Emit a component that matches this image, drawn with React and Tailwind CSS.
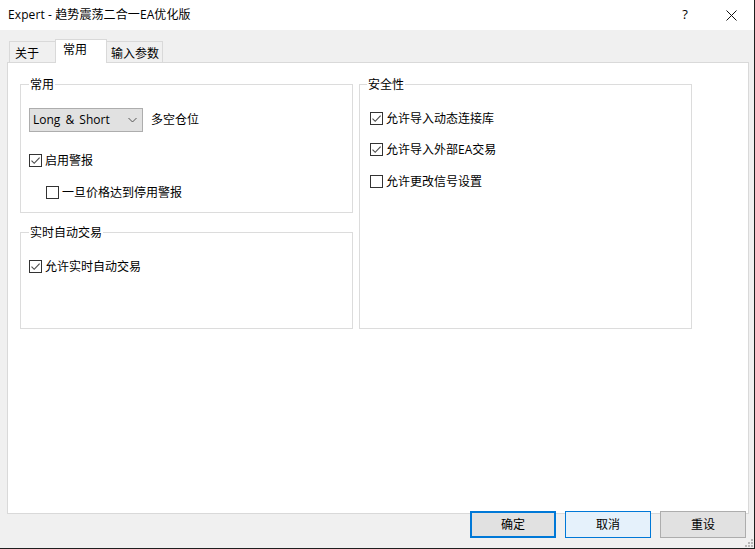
import React from "react";

function Box({ checked }) {
  return (
    <span className="flex h-[13px] w-[13px] shrink-0 items-center justify-center border border-[#333333] bg-white">
      {checked && (
        <svg width="11" height="11" viewBox="0 0 11 11">
          <path d="M1.5 5.6 L4.2 8.3 L9.6 2.6" stroke="#4a4a4a" strokeWidth="1.15" fill="none" />
        </svg>
      )}
    </span>
  );
}

function CheckRow({ checked, label, className = "" }) {
  return (
    <div className={"flex h-[13px] items-center gap-[3px] leading-[14px] " + className}>
      <Box checked={checked} />
      <span className="whitespace-nowrap">{label}</span>
    </div>
  );
}

function Tab({ label, selected, w, pl }) {
  if (selected) {
    return (
      <div
        className={`relative z-10 -mb-px -ml-px h-[24px] border-l border-r border-t border-[#d9d9d9] bg-white pt-[3px] leading-[14px] ${w} ${pl}`}
      >
        {label}
      </div>
    );
  }
  return (
    <div
      className={`h-[21px] border-l border-r border-t border-[#d9d9d9] bg-[#f0f0f0] pt-[5px] leading-[14px] ${w} ${pl}`}
    >
      {label}
    </div>
  );
}

export default function App() {
  return (
    <div className="relative flex h-[549px] w-[755px] flex-col overflow-hidden border-b border-r border-[#1f1f1f] bg-[#f0f0f0] font-[family-name:'Open_Sans','Noto_Sans_CJK_SC',sans-serif] text-[12px] text-black">
      {/* Title bar */}
      <div className="flex h-[30px] shrink-0 items-center bg-white pl-[8px]">
        <span className="whitespace-nowrap leading-[16px] tracking-[0.1px]">Expert - 趋势震荡二合一EA优化版</span>
        <div className="ml-auto flex h-full">
          <div className="flex h-full w-[46px] items-center justify-center text-[13px]">?</div>
          <div className="flex h-full w-[46px] items-center justify-center">
            <svg width="11" height="11" viewBox="0 0 11 11">
              <path d="M0.5 0.5 L10.5 10.5 M10.5 0.5 L0.5 10.5" stroke="#111" strokeWidth="1" fill="none" />
            </svg>
          </div>
        </div>
      </div>

      {/* Body */}
      <div className="flex flex-1 flex-col pl-[7px] pt-[9px]">
        {/* Tabs */}
        <div className="flex h-[23px] items-end pl-[2px]">
          <Tab label="关于" w="w-[47px]" pl="pl-[5px]" />
          <Tab label="常用" selected w="w-[52px]" pl="pl-[7px]" />
          <Tab label="输入参数" w="w-[57px] -ml-px" pl="pl-[4px]" />
        </div>

        {/* Panel */}
        <div className="flex h-[452px] w-[742px] gap-[6px] border border-[#d9d9d9] bg-white pl-[12px] pt-[21px]">
          {/* Left column */}
          <div className="flex w-[333px] flex-col gap-[19px]">
            <div className="flex h-[129px] flex-col border border-[#dcdcdc] pl-[8px]">
              <span className="-mt-[7px] block w-fit bg-white px-[1px] leading-[14px]">常用</span>
              <div className="mt-[16px] flex items-center">
                <div className="flex h-[24px] w-[114px] items-center justify-between border border-[#adadad] bg-[#e1e1e1] pl-[3px] pr-[5px]">
                  <span className="whitespace-nowrap leading-[14px] [word-spacing:2px]">Long &amp; Short</span>
                  <svg width="9" height="6" viewBox="0 0 9 6">
                    <path d="M0.5 1 L4.5 5 L8.5 1" stroke="#555" strokeWidth="1" fill="none" />
                  </svg>
                </div>
                <span className="ml-[8px] leading-[14px]">多空仓位</span>
              </div>
              <CheckRow checked label="启用警报" className="mt-[22px]" />
              <CheckRow label="一旦价格达到停用警报" className="ml-[17px] mt-[19px]" />
            </div>

            <div className="flex h-[97px] flex-col border border-[#dcdcdc] pl-[8px]">
              <span className="-mt-[7px] block w-fit bg-white px-[1px] leading-[14px]">实时自动交易</span>
              <CheckRow checked label="允许实时自动交易" className="mt-[20px]" />
            </div>
          </div>

          {/* Right column */}
          <div className="flex h-[245px] w-[333px] flex-col border border-[#dcdcdc] pl-[10px]">
            <span className="-ml-[3px] -mt-[7px] block w-fit bg-white px-[1px] leading-[14px]">安全性</span>
            <CheckRow checked label="允许导入动态连接库" className="mt-[20px]" />
            <CheckRow checked label="允许导入外部EA交易" className="mt-[18px]" />
            <CheckRow label="允许更改信号设置" className="mt-[19px]" />
          </div>
        </div>

        {/* Buttons */}
        <div className="-mt-[3px] flex justify-end gap-[9px] pr-[8px]">
          <button className="flex h-[27px] w-[86px] items-center justify-center border-2 border-[#0078d7] bg-[#e1e1e1] leading-[14px]">
            确定
          </button>
          <button className="flex h-[27px] w-[86px] items-center justify-center border border-[#0078d7] bg-[#e5f1fb] leading-[14px]">
            取消
          </button>
          <button className="flex h-[27px] w-[86px] items-center justify-center border border-[#adadad] bg-[#e1e1e1] leading-[14px]">
            重设
          </button>
        </div>
      </div>

      {/* Size grip */}
      <svg className="absolute bottom-[1px] right-[1px]" width="8" height="8" viewBox="0 0 8 8">
        <rect x="6" y="0" width="2" height="2" fill="#b8b8b8" />
        <rect x="3" y="3" width="2" height="2" fill="#b8b8b8" />
        <rect x="6" y="3" width="2" height="2" fill="#b8b8b8" />
        <rect x="0" y="6" width="2" height="2" fill="#b8b8b8" />
        <rect x="3" y="6" width="2" height="2" fill="#b8b8b8" />
        <rect x="6" y="6" width="2" height="2" fill="#b8b8b8" />
      </svg>
    </div>
  );
}
